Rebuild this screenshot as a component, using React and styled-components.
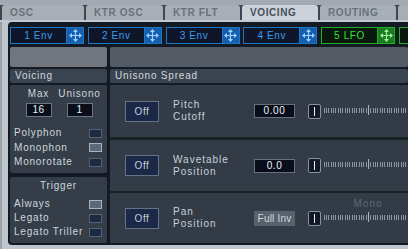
import React from "react";
import styled, { createGlobalStyle } from "styled-components";

const GlobalStyle = createGlobalStyle`
  html, body { margin: 0; padding: 0; background: #b9bfc7; }
  body { font-family: "Liberation Sans", Arial, sans-serif; }
`;

const Screen = styled.div`
  width: 408px;
  height: 249px;
  overflow: hidden;
  background: #b9bfc7;
  display: flex;
  flex-direction: column;
`;

const TabBar = styled.div`
  display: flex;
  gap: 2px;
  height: 15px;
  padding: 5px 0 0 2px;
  background: linear-gradient(#a3a9b1 0 5px, #40464e 5px);
`;

const Tab = styled.div`
  flex: 0 0 ${(p) => p.$w}px;
  height: 15px;
  box-sizing: border-box;
  padding-left: 8px;
  border-radius: 3px 3px 0 0;
  background: ${(p) => (p.$active ? "#ccd2d9" : "#a8aeb6")};
  color: ${(p) => (p.$active ? "#46505a" : "#68717b")};
  font: bold 10px/16px "Liberation Sans", Arial, sans-serif;
  letter-spacing: 0.6px;
  white-space: nowrap;
`;

const FrameTop = styled.div`
  height: 2px;
  background: #c2c8cf;
`;

const Body = styled.div`
  flex: 1;
  display: flex;
  padding: 0 0 4px 8px;
  background: #bfc5cc;
  border-left: 2px solid #9ba1a9;
  box-sizing: border-box;
`;

const Frame = styled.div`
  flex: 1;
  min-width: 0;
  display: flex;
  flex-direction: column;
  padding: 5px 0 2px 2px;
  background: #141a24;
  border-radius: 4px 0 0 4px;
  margin-left: -2px;
`;

const SlotRow = styled.div`
  display: flex;
  gap: 3.75px;
  height: 17px;
`;

const Slot = styled.div`
  flex: 0 0 74px;
  height: 17px;
  box-sizing: border-box;
  display: flex;
  border: 1px solid ${(p) => (p.$green ? "#1fae24" : "#1b76c6")};
  background: ${(p) => (p.$green ? "#0a170d" : "#10162a")};
`;

const SlotLabel = styled.div`
  flex: 1;
  text-align: center;
  color: ${(p) => (p.$green ? "#38e03a" : "#3b9bea")};
  font: 10px/15px "Liberation Sans", Arial, sans-serif;
  letter-spacing: 0.6px;
`;

const SlotGrip = styled.div`
  width: 16px;
  display: flex;
  align-items: center;
  justify-content: center;
  border-left: 1px solid ${(p) => (p.$green ? "#1fae24" : "#1b76c6")};
  background: ${(p) => (p.$green ? "#1c7a20" : "#155fae")};
`;

const Columns = styled.div`
  display: flex;
  gap: 3px;
  margin-top: ${(p) => p.$top}px;
  height: ${(p) => p.$h}px;
`;

const Block = styled.div`
  flex: ${(p) => (p.$left ? "0 0 97px" : "1")};
  border-radius: 2px;
  background: ${(p) => (p.$left ? "#71767e" : "#545a64")};
`;

const Header = styled.div`
  flex: ${(p) => (p.$left ? "0 0 97px" : "1")};
  box-sizing: border-box;
  padding-left: 5px;
  border-radius: 2px;
  background: #3a4450;
  color: #d2d8de;
  font: 10px/14px "Liberation Sans", Arial, sans-serif;
  letter-spacing: 0.8px;
  white-space: nowrap;
`;

const LeftCol = styled.div`
  flex: 0 0 97px;
  display: flex;
  flex-direction: column;
  gap: 4px;
`;

const Box = styled.div`
  height: ${(p) => p.$h}px;
  box-sizing: border-box;
  padding-top: 3px;
  background: #343d48;
  border-radius: 2px;
  color: #cfd6dd;
  font: 10px/12px "Liberation Sans", Arial, sans-serif;
  letter-spacing: 0.8px;
`;

const MaxGrid = styled.div`
  display: grid;
  grid-template-columns: 41px 41px;
  padding-left: 8px;
  justify-items: center;
  row-gap: 3px;
`;

const NumBox = styled.div`
  width: 26px;
  height: 14px;
  box-sizing: border-box;
  border: 1px solid #6c7684;
  background: #0a0e1a;
  color: #eef2f6;
  text-align: center;
  font: 10px/12px "Liberation Sans", Arial, sans-serif;
  letter-spacing: 0.4px;
`;

const OptionList = styled.div`
  margin-top: ${(p) => p.$top}px;
`;

const Option = styled.div`
  height: ${(p) => p.$h}px;
  display: flex;
  align-items: center;
  justify-content: space-between;
  padding: 0 5px 0 4px;
  white-space: nowrap;
`;

const Check = styled.div`
  width: 13px;
  height: 9px;
  box-sizing: border-box;
  border: 1px solid ${(p) => (p.$on ? "#a9b3bf" : "#556273")};
  background: ${(p) => (p.$on ? "#5b6a7b" : "#1b2944")};
`;

const BoxTitle = styled.div`
  text-align: center;
`;

const RightCol = styled.div`
  flex: 1;
  min-width: 0;
  display: flex;
  flex-direction: column;
  background: #172424;
`;

const ParamRow = styled.div`
  height: ${(p) => p.$h}px;
  margin-top: ${(p) => p.$gap}px;
  display: flex;
  align-items: center;
  background: #323b46;
  color: #c9d0d8;
  font: 10px/12px "Liberation Sans", Arial, sans-serif;
  letter-spacing: 1px;
  white-space: nowrap;
`;

const OffButton = styled.div`
  flex: 0 0 34px;
  height: 21px;
  margin-left: 15px;
  box-sizing: border-box;
  border: 1px solid #667283;
  background: #1b2949;
  color: #c4ccd6;
  text-align: center;
  line-height: 19px;
  letter-spacing: 0.6px;
`;

const ParamName = styled.div`
  flex: 0 0 81px;
  margin-left: 14px;
`;

const ValueBox = styled.div`
  flex: 0 0 41px;
  height: 14px;
  box-sizing: border-box;
  border: 1px solid #67717d;
  background: #0a0e1b;
  color: #eef2f6;
  text-align: center;
  line-height: 12px;
  letter-spacing: 0.6px;
`;

const ModeChip = styled.div`
  flex: 0 0 41px;
  height: 15px;
  box-sizing: border-box;
  background: #58626d;
  color: #cfd5db;
  text-align: center;
  line-height: 15px;
  letter-spacing: 0.2px;
`;

const Slider = styled.div`
  position: relative;
  flex: 1;
  height: 15px;
  margin-left: 13px;
  display: flex;
  align-items: center;
`;

const Thumb = styled.div`
  flex: 0 0 13px;
  height: 15px;
  box-sizing: border-box;
  border: 1px solid #8893a1;
  border-radius: 2px;
  background: #121828;
  display: flex;
  align-items: center;
  justify-content: center;

  &::after {
    content: "";
    width: 1px;
    height: 9px;
    margin-left: -1px;
    background: #f2f4f6;
  }
`;

const SliderNote = styled.div`
  position: absolute;
  top: -13px;
  left: 60px;
  transform: translateX(-50%);
  color: #5f6975;
  letter-spacing: 1px;
`;

function MoveIcon({ green }) {
  const c = green ? "#9af29a" : "#9fd2ff";
  return (
    <svg width="13" height="13" viewBox="0 0 13 13">
      <path d="M6.5 2v9M2 6.5h9" stroke={c} strokeWidth="1.2" />
      <path d="M6.5 0L4 3h5zM6.5 13L4 10h5zM0 6.5L3 4v5zM13 6.5L10 4v5z" fill={c} />
    </svg>
  );
}

function Ticks() {
  const ticks = [];
  for (let i = 0; i < 48; i++) {
    const x = 45 + Math.round(((i - 19) * 7) / 3);
    if (x < 0) continue;
    const mid = i === 19;
    ticks.push(
      <line
        key={i}
        x1={x + 0.5}
        x2={x + 0.5}
        y1={mid ? 1 : 4}
        y2={mid ? 11 : 9}
        stroke={mid ? "#a9b1bb" : "#8c96a2"}
        strokeWidth="1"
      />
    );
  }
  return (
    <svg width="110" height="15" style={{ marginLeft: 2, flexShrink: 0 }}>
      {ticks}
    </svg>
  );
}

// the last tab and slot are cut off by the window edge; their labels are not visible
const tabs = [
  { name: "OSC", w: 82 },
  { name: "KTR OSC", w: 77 },
  { name: "KTR FLT", w: 75 },
  { name: "VOICING", w: 76, active: true },
  { name: "ROUTING", w: 76 },
  { name: "", w: 80 },
];

const slots = [
  { label: "1 Env" },
  { label: "2 Env" },
  { label: "3 Env" },
  { label: "4 Env" },
  { label: "5 LFO", green: true },
  { label: "", green: true },
];

const params = [
  { name: ["Pitch", "Cutoff"], value: "0.00", h: 52, gap: 0 },
  { name: ["Wavetable", "Position"], value: "0.0", h: 51, gap: 3 },
  { name: ["Pan", "Position"], mode: "Full Inv", note: "Mono", h: 50, gap: 2 },
];

export default function App() {
  return (
    <Screen>
      <GlobalStyle />
      <TabBar>
        {tabs.map((t, i) => (
          <Tab key={i} $w={t.w} $active={t.active}>
            {t.name}
          </Tab>
        ))}
      </TabBar>
      <FrameTop />
      <Body>
        <Frame>
          <SlotRow>
            {slots.map((s, i) => (
              <Slot key={i} $green={s.green}>
                <SlotLabel $green={s.green}>{s.label}</SlotLabel>
                <SlotGrip $green={s.green}>
                  <MoveIcon green={s.green} />
                </SlotGrip>
              </Slot>
            ))}
          </SlotRow>

          <Columns $top={3} $h={20}>
            <Block $left />
            <Block />
          </Columns>

          <Columns $top={2} $h={14}>
            <Header $left>Voicing</Header>
            <Header>Unisono Spread</Header>
          </Columns>

          <Columns $top={2} $h={158}>
            <LeftCol>
              <Box $h={88}>
                <MaxGrid>
                  <span>Max</span>
                  <span>Unisono</span>
                  <NumBox>16</NumBox>
                  <NumBox>1</NumBox>
                </MaxGrid>
                <OptionList $top={9}>
                  <Option $h={14.5}>
                    Polyphon <Check />
                  </Option>
                  <Option $h={14.5}>
                    Monophon <Check $on />
                  </Option>
                  <Option $h={14.5}>
                    Monorotate <Check />
                  </Option>
                </OptionList>
              </Box>
              <Box $h={66}>
                <BoxTitle>Trigger</BoxTitle>
                <OptionList $top={5}>
                  <Option $h={14}>
                    Always <Check $on />
                  </Option>
                  <Option $h={14}>
                    Legato <Check />
                  </Option>
                  <Option $h={14}>
                    Legato Triller <Check />
                  </Option>
                </OptionList>
              </Box>
            </LeftCol>

            <RightCol>
              {params.map((p) => (
                <ParamRow key={p.name.join()} $h={p.h} $gap={p.gap}>
                  <OffButton>Off</OffButton>
                  <ParamName>
                    {p.name[0]}
                    <br />
                    {p.name[1]}
                  </ParamName>
                  {p.mode ? <ModeChip>{p.mode}</ModeChip> : <ValueBox>{p.value}</ValueBox>}
                  <Slider>
                    {p.note && <SliderNote>{p.note}</SliderNote>}
                    <Thumb />
                    <Ticks />
                  </Slider>
                </ParamRow>
              ))}
            </RightCol>
          </Columns>
        </Frame>
      </Body>
    </Screen>
  );
}
